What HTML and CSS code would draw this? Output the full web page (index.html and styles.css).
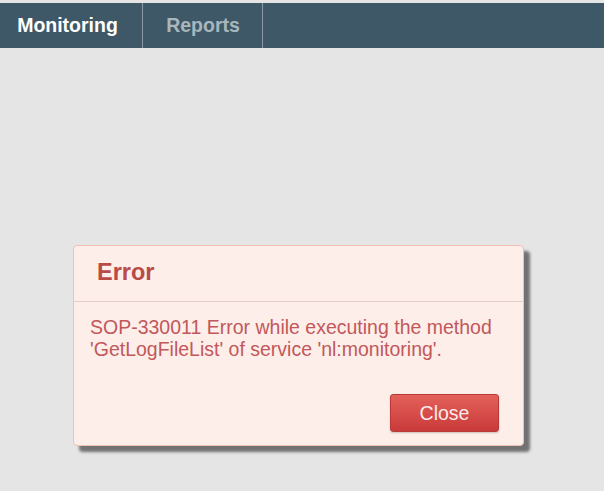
FILE: index.html
```html
<!DOCTYPE html>
<html lang="en">
<head>
    <meta charset="UTF-8">
    <title>Monitoring</title>
    <link rel="stylesheet" href="styles.css">
</head>
<body>
    <ul class="tabs">
        <li class="tab active">Monitoring</li>
        <li class="tab">Reports</li>
    </ul>

    <div class="stage">
        <div class="dialog">
            <div class="dialogHead">Error</div>
            <div class="dialogBody">
                SOP-330011 Error while executing the method<br>
                'GetLogFileList' of service 'nl:monitoring'.
            </div>
            <div class="dialogFoot">
                <input type="button" class="closeBtn" value="Close">
            </div>
        </div>
    </div>
</body>
</html>
```

FILE: styles.css
```css
*{
    font-family: "Liberation Sans", Arial, sans-serif;
    box-sizing: border-box;
}
body{
    margin: 0;
    padding-top: 3px;
    background-color: #e5e5e5;
    height: 491px;
    overflow: hidden;
}
.tabs{
    list-style: none;
    margin: 0;
    padding: 0;
    display: flex;
    height: 45px;
    background-color: #3e5867;
}
.tab{
    display: flex;
    align-items: center;
    justify-content: center;
    font-size: 19.5px;
    font-weight: bold;
    color: #a8b6be;
    border-right: solid 1px #8a9ba5;
    width: 120px;
    padding-left: 1px;
}
.tab.active{
    color: #ffffff;
    width: 143px;
    padding: 0 7px 0 0;
}
.stage{
    padding: 197px 0 0 73px;
}
.dialog{
    width: 451px;
    height: 201px;
    background-color: #fdeeea;
    border: solid 1px #f1bfb6;
    border-radius: 4px;
    box-shadow: 6px 6px 3px rgba(0, 0, 0, 0.5);
    display: flex;
    flex-direction: column;
}
.dialogHead{
    height: 56px;
    padding: 13px 0 0 23px;
    font-size: 23.5px;
    font-weight: bold;
    color: #b94a48;
    border-bottom: solid 1px #e5cdc8;
}
.dialogBody{
    padding: 14px 0 0 16px;
    font-size: 19.5px;
    line-height: 22px;
    color: #c2585a;
    flex: 1;
}
.dialogFoot{
    display: flex;
    justify-content: flex-end;
    padding: 0 24px 13px 0;
}
.closeBtn{
    width: 109px;
    height: 38px;
    border: solid 1px #b83a38;
    border-radius: 3px;
    background: linear-gradient(#e4615a, #c93a3a);
    color: #fbeaea;
    font-size: 19.5px;
    box-shadow: 0 1px 2px rgba(0, 0, 0, 0.2);
}
```
